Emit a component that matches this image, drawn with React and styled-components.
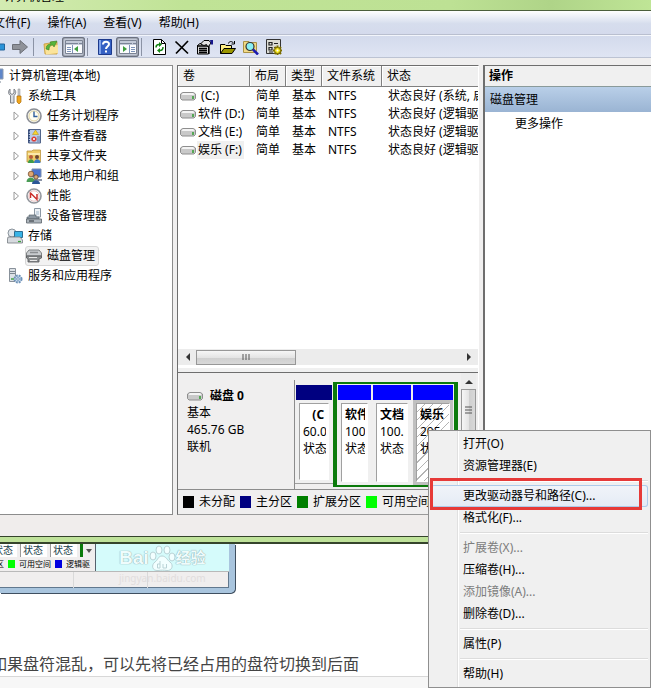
import styled, { createGlobalStyle, css } from 'styled-components';


const tree = [
  { text: '计算机管理(本地)', level: 0, icon: 'computer' },
  { text: '系统工具', level: 1, icon: 'tools' },
  { text: '任务计划程序', level: 2, icon: 'clock', expandable: true },
  { text: '事件查看器', level: 2, icon: 'events', expandable: true },
  { text: '共享文件夹', level: 2, icon: 'shared', expandable: true },
  { text: '本地用户和组', level: 2, icon: 'users', expandable: true },
  { text: '性能', level: 2, icon: 'perf', expandable: true },
  { text: '设备管理器', level: 2, icon: 'device' },
  { text: '存储', level: 1, icon: 'storage' },
  { text: '磁盘管理', level: 2, icon: 'disk', selected: true },
  { text: '服务和应用程序', level: 1, icon: 'services' },
];

const volumes = [
  { name: '\u00a0(C:)', status: '状态良好 (系统, 启动)' },
  { name: '软件 (D:)', status: '状态良好 (逻辑驱动器)' },
  { name: '文档 (E:)', status: '状态良好 (逻辑驱动器)' },
  { name: '娱乐 (F:)', status: '状态良好 (逻辑驱动器)', selected: true },
];

const logicalDrives = [
  { name: '软件', size: '100', width: 33 },
  { name: '文档', size: '100.', width: 38 },
  { name: '娱乐', size: '205', width: 40, selected: true },
];

const legend = [
  { text: '未分配', color: '#000000' },
  { text: '主分区', color: '#000080' },
  { text: '扩展分区', color: '#008000' },
  { text: '可用空间', color: '#00ff00' },
  { text: '逻辑驱动器', color: '#0000ff' },
];

const menuItems = [
  { text: '打开(O)' },
  { text: '资源管理器(E)' },
  null,
  { text: '更改驱动器号和路径(C)...', active: true },
  { text: '格式化(F)...' },
  null,
  { text: '扩展卷(X)...', disabled: true },
  { text: '压缩卷(H)...' },
  { text: '添加镜像(A)...', disabled: true },
  { text: '删除卷(D)...' },
  null,
  { text: '属性(P)' },
  null,
  { text: '帮助(H)' },
];


export default function App() {
  return (
    <Page>
      <GlobalStyle />

      <Window>
        <TitleBar>计算机管理</TitleBar>
        <MenuBar>
          <MenuButton>文件(F)</MenuButton>
          <MenuButton>操作(A)</MenuButton>
          <MenuButton>查看(V)</MenuButton>
          <MenuButton>帮助(H)</MenuButton>
        </MenuBar>
        <Toolbar />

        <Body>
          <TreePanel>
            {tree.map((item) => (
              <TreeItem key={item.text} $level={item.level}>
                {item.level === 2 && (
                  <Expander>
                    {item.expandable && (
                      <svg width="12" height="12">
                        <path d="M5 2 L9.500 6 L5 10 Z" fill="#fff" stroke="#9a9a9a" />
                      </svg>
                    )}
                  </Expander>
                )}
                <TreeLabel $selected={item.selected}>
                  <Icon name={item.icon} />
                  {item.text}
                </TreeLabel>
              </TreeItem>
            ))}
          </TreePanel>

          <CenterPanel>
            <VolumeList />
            <DiskMap />
            <Legend>
              {legend.map((item) => (
                <LegendItem key={item.text}>
                  <Swatch $color={item.color} />
                  {item.text}
                </LegendItem>
              ))}
            </Legend>
          </CenterPanel>

          <ActionsPanel>
            <ActionsTitle>操作</ActionsTitle>
            <ActionsSection>磁盘管理</ActionsSection>
            <ActionButton>更多操作</ActionButton>
          </ActionsPanel>
        </Body>

        <StatusBar />
        <WindowEdge />
      </Window>

      <OldScreenshot />
      <Caption>如果盘符混乱，可以先将已经占用的盘符切换到后面</Caption>
      <Footer />

      <ContextMenu />
    </Page>
  );
}


function Toolbar() {
  return (
    <ToolbarContainer>
      <ToolButton aria-label="后退"><Icon name="back" /></ToolButton>
      <ToolButton aria-label="前进"><Icon name="forward" /></ToolButton>
      <ToolSeparator />
      <ToolButton aria-label="上移一级"><Icon name="up" /></ToolButton>
      <ToolButton aria-label="控制台树" $pressed><Icon name="paneLeft" /></ToolButton>
      <ToolSeparator />
      <ToolButton aria-label="帮助"><Icon name="help" /></ToolButton>
      <ToolButton aria-label="操作窗格" $pressed><Icon name="paneRight" /></ToolButton>
      <ToolSeparator />
      <ToolButton aria-label="刷新"><Icon name="refresh" /></ToolButton>
      <ToolButton aria-label="删除"><Icon name="remove" /></ToolButton>
      <ToolButton aria-label="属性"><Icon name="properties" /></ToolButton>
      <ToolButton aria-label="打开"><Icon name="open" /></ToolButton>
      <ToolButton aria-label="查找"><Icon name="find" /></ToolButton>
      <ToolButton aria-label="设置"><Icon name="settings" /></ToolButton>
    </ToolbarContainer>
  );
}

function VolumeList() {
  return (
    <>
      <ListPane>
        <Table>
          <colgroup>
            <col width="72" />
            <col width="36" />
            <col width="36" />
            <col width="60" />
            <col />
          </colgroup>
          <thead>
            <tr>
              <th>卷</th>
              <th>布局</th>
              <th>类型</th>
              <th>文件系统</th>
              <th>状态</th>
            </tr>
          </thead>
          <tbody>
            {volumes.map((volume) => (
              <tr key={volume.name}>
                <NameCell>
                  <VolumeName>
                    <Icon name="drive" />
                    <VolumeText $selected={volume.selected}>{volume.name}</VolumeText>
                  </VolumeName>
                </NameCell>
                <td>简单</td>
                <td>基本</td>
                <td>NTFS</td>
                <td>{volume.status}</td>
              </tr>
            ))}
          </tbody>
        </Table>
      </ListPane>
      <ScrollRow>
        <ScrollArrow aria-label="向左滚动">
          <svg width="5" height="8"><path d="M5 0 L1 4 L5 8 Z" fill="#333" /></svg>
        </ScrollArrow>
        <ThumbH>
          <svg width="9" height="6"><path d="M1 0V6M4 0V6M7 0V6" stroke="#555" fill="none" /></svg>
        </ThumbH>
        <Spacer />
        <ScrollArrow aria-label="向右滚动">
          <svg width="5" height="8"><path d="M0 0 L4 4 L0 8 Z" fill="#333" /></svg>
        </ScrollArrow>
      </ScrollRow>
      <Splitter />
    </>
  );
}

function DiskMap() {
  return (
    <DiskPane>
      <DiskInfo>
        <DiskTitle>
          <Icon name="drive" />
          磁盘 0
        </DiskTitle>
        <p>基本</p>
        <p>465.76 GB</p>
        <p>联机</p>
      </DiskInfo>
      <PrimaryPart>
        <Volume name={'\u00a0\u00a0\u00a0(C'} size="60.0" color="#000080" width={36} />
      </PrimaryPart>
      <ExtendedPart>
        {logicalDrives.map((drive) => (
          <Volume key={drive.name} color="#0000ff" {...drive} />
        ))}
      </ExtendedPart>
      <ScrollColumn>
        <ScrollArrow aria-label="向上滚动">
          <svg width="8" height="5"><path d="M0 5 L4 1 L8 5 Z" fill="#333" /></svg>
        </ScrollArrow>
        <ThumbV>
          <svg width="7" height="9"><path d="M0 1H7M0 4H7M0 7H7" stroke="#555" fill="none" /></svg>
        </ThumbV>
      </ScrollColumn>
    </DiskPane>
  );
}

function Volume({ name, size, color, width, selected }) {
  return (
    <VolumeContainer $width={width} $selected={selected}>
      <VolumeBar $color={color} />
      <VolumeBox $selected={selected}>
        <VolumeClip>
          <strong>{name}</strong>
          <span>{size}</span>
          <span>状态</span>
        </VolumeClip>
      </VolumeBox>
    </VolumeContainer>
  );
}

function ContextMenu() {
  return (
    <MenuContainer role="menu">
      {menuItems.map((item, index) =>
        item ? (
          <MenuItem key={item.text} role="menuitem" disabled={item.disabled} $active={item.active}>
            {item.text}
            {item.active && <RedFrame />}
          </MenuItem>
        ) : (
          <MenuSeparator key={index} />
        )
      )}
    </MenuContainer>
  );
}

function OldScreenshot() {
  return (
    <OldWindow>
      <OldContent>
        <OldLeft>
          <OldVolumes>
            <OldVolume>状态</OldVolume>
            <OldVolume>状态</OldVolume>
            <OldVolume>状态</OldVolume>
            <OldGreen />
            <svg width="6" height="4"><path d="M0 0H6L3 4Z" fill="#555" /></svg>
          </OldVolumes>
          <OldLegend>
            区
            <OldSwatch $color="#00ff00" />
            可用空间
            <OldSwatch $color="#0000e0" />
            逻辑驱
          </OldLegend>
        </OldLeft>
        <OldRight />
      </OldContent>
      <OldStatus>
        <span />
        <span />
      </OldStatus>
      <Watermark>
        <WatermarkLogo>
          Bai
          <svg width="27" height="27" viewBox="0 0 27 27" fill="#f2ffff" stroke="#b9d3d6">
            <ellipse cx="4" cy="11" rx="3" ry="4" />
            <ellipse cx="10" cy="5" rx="3" ry="4" />
            <ellipse cx="18" cy="5" rx="3" ry="4" />
            <ellipse cx="23" cy="12" rx="3" ry="4" />
            <path d="M13 11 C17 11 18 15 21 17 C25 20 23 26 18 25.500 C15 25 12 25 9 25.500 C3 26 2 20 6 17 C9 15 9 11 13 11Z" />
            <path d="M11 16V23H8.500V19H11M14 19V23H17.500V19" fill="none" />
          </svg>
          <small>经验</small>
        </WatermarkLogo>
        <WatermarkUrl>jingyan.baidu.com</WatermarkUrl>
      </Watermark>
    </OldWindow>
  );
}


const pane = (
  <>
    <path d="M0.500 1.500H17.500V14.500H0.500Z" fill="#fbfcfe" stroke="#7c8494" />
    <path d="M1 2H17V6H1Z" fill="#c3cad8" />
    <path d="M1 4.500H13M14 4.500H17" stroke="#7b8598" />
  </>
);

const icons = {
  back: <path d="M0 8L8 1V5H15.500V11H8V15Z" fill="#2a93d8" stroke="#22659c" />,
  forward: <path d="M0.500 5.500H8V1.500L15.500 8L8 14.500V10.500H0.500Z" fill="#8f9299" stroke="#6d7078" />,
  up: (
    <>
      <path d="M1 5L7 4L8 3H14V15H2Z" fill="#eec967" stroke="#c59a38" strokeWidth="0.800" />
      <path d="M2 8L15 6V14L3 15.500Z" fill="#fbe49b" />
      <path d="M3 10C3 6 6 5 8 5L7 3L14 2L11 8L10 6C7 6 6 8 6 11Z" fill="#57b53c" stroke="#348222" strokeWidth="0.600" />
    </>
  ),
  paneLeft: (
    <>
      {pane}
      <path d="M2 8.500H6M2 10.500H6M2 12.500H6M7.500 6V14" stroke="#7d93b8" />
      <path d="M13 7V13L9 10Z" fill="#3d9e3d" />
    </>
  ),
  paneRight: (
    <>
      {pane}
      <path d="M12 8.500H16M12 10.500H16M12 12.500H16M10.500 6V14" stroke="#7d93b8" />
      <path d="M4 7V13L8 10Z" fill="#3d9e3d" />
    </>
  ),
  help: (
    <>
      <path d="M1.500 0.500H14.500V15.500H1.500Z" fill="#3460c4" stroke="#1d3a8c" />
      <path d="M2 1H4V15H2Z" fill="#7fa2ea" />
      <path d="M6 5.500C6 2 12 2 12 5C12 7.500 9 7.500 9 10M9 11.500V13.500" fill="none" stroke="#fff" strokeWidth="2" />
    </>
  ),
  refresh: (
    <>
      <path d="M2.500 0.500H10.500L14.500 4.500V15.500H2.500Z" fill="#fff" stroke="#000" />
      <path d="M10.500 0.500V4.500H14.500" fill="none" stroke="#000" />
      <path d="M5 8.500C5 6 6.500 5.500 8 5.500M12 8C12 10.500 10.500 11.500 9 11.500" fill="none" stroke="#148514" strokeWidth="1.500" />
      <path d="M8 3L11 5.500L8 8ZM9 9V14L6 11.500Z" fill="#148514" />
    </>
  ),
  remove: <path d="M1.500 2.500L14 14.500M14 2L2 14.500" stroke="#000" strokeWidth="1.700" />,
  properties: (
    <>
      <path d="M0.500 6.500L3 4.500H11.500V15H0.500Z" fill="#d8d8d8" stroke="#000" />
      <path d="M0 7H11M2 9.500H10M2 11.500H10M2 13.500H10M12 6V15" stroke="#000" strokeWidth="1.300" />
      <path d="M3.500 5L7 1.500H12L14 4L11 8L9.500 5.500L7 6.500Z" fill="#e4e4e4" stroke="#000" />
      <path d="M13 1H16V5.500H14Z" fill="#16168c" />
    </>
  ),
  open: (
    <>
      <path d="M0.500 14.500V5.500H5L6 6.500H11.500V9" fill="#ffef85" stroke="#000" />
      <path d="M0.500 14.500L4 9.500H15.500L12 14.500Z" fill="#9a9600" stroke="#000" />
      <path d="M8.500 4.500C9 2 12 2 13.500 4M14.500 2V5H11.500" fill="none" stroke="#000" />
    </>
  ),
  find: (
    <>
      <path d="M0.500 13.500V2.500H6L7 3.500H13.500V13.500Z" fill="#f1d986" stroke="#aa9246" />
      <circle cx="7" cy="7.500" r="4" fill="#8af0f4" stroke="#333" strokeWidth="1.200" />
      <path d="M10 10.500L15 15.500" stroke="#1a1ab0" strokeWidth="2.500" />
    </>
  ),
  settings: (
    <>
      <path d="M0.500 0.500H14.500V14.500H0.500Z" fill="#dcdcd4" stroke="#333" />
      <path d="M3 3.500H6V6H3ZM8 4.500H12M3 8.500H6V11H3ZM8 8.500H12M3 13H7" fill="none" stroke="#222" strokeWidth="1.200" />
      <path d="M11.500 6.500V16M7 11.500H16M8.500 8L15 15M15 8L8.500 15" stroke="#7a6c00" strokeWidth="2" />
      <circle cx="11.500" cy="11.500" r="3" fill="#f6e620" stroke="#7a6c00" />
      <circle cx="11.500" cy="11.500" r="1" fill="#fff" />
    </>
  ),
  computer: (
    <>
      <path d="M1 1H15V11H1Z" fill="#5f86c9" stroke="#8d9bb0" />
      <path d="M4 13H13V15H4Z" fill="#b9c0c8" />
    </>
  ),
  tools: (
    <>
      <path d="M3 1V5L5 6.500L7 5V1C9.500 3 9 6 7 7.500V15H3.500V7.500C1 6 1 3 3 1Z" fill="#d9dde2" stroke="#70757c" strokeWidth="0.900" />
      <path d="M11 1H13V8H11Z" fill="#c8ccd2" stroke="#888" strokeWidth="0.500" />
      <path d="M10 8H14V14L12 16L10 14Z" fill="#f0a61c" stroke="#b06f0a" strokeWidth="0.700" />
    </>
  ),
  clock: (
    <>
      <circle cx="8" cy="8" r="7" fill="#f8f8f2" stroke="#8c8f96" strokeWidth="1.600" />
      <circle cx="8" cy="8" r="5" fill="#fffef3" stroke="#d7c88c" strokeWidth="0.800" />
      <path d="M8 3.500V8.500H11.500" fill="none" stroke="#315f9c" strokeWidth="1.400" />
    </>
  ),
  events: (
    <>
      <path d="M2.500 1.500H14.500V15H2.500Z" fill="#b9cbe8" stroke="#52658a" />
      <path d="M3 2V15" stroke="#344a78" strokeWidth="2" strokeDasharray="1.500 1" />
      <path d="M9.500 2L12.500 6.500H6.500Z" fill="#f8d32d" stroke="#b38b0b" strokeWidth="0.500" />
      <circle cx="8" cy="11" r="2.600" fill="#d83a35" />
      <path d="M6.800 9.800L9.200 12.200M9.200 9.800L6.800 12.200" stroke="#fff" strokeWidth="0.800" />
      <path d="M11 9H14M11 11H14M11 13H14" stroke="#657ca8" />
    </>
  ),
  shared: (
    <>
      <path d="M1 3H6L7 2H14.500V14H1Z" fill="#efcb68" stroke="#bd9740" strokeWidth="0.800" />
      <path d="M2 5H14V7H2Z" fill="#fbe9ac" />
      <circle cx="5" cy="9" r="2" fill="#b65c3d" />
      <path d="M2 15C2 10 8 10 8 15Z" fill="#3e9c47" />
      <circle cx="11" cy="9" r="2" fill="#6b4632" />
      <path d="M8 15C8 10 14.500 10 14.500 15Z" fill="#3c7dc4" />
    </>
  ),
  users: (
    <>
      <path d="M6 1H15V9H6Z" fill="#4b73ce" stroke="#7d8fae" />
      <path d="M8 11H16V13H8Z" fill="#8a93a6" />
      <circle cx="5" cy="6" r="2.800" fill="#dda672" stroke="#6c4528" strokeWidth="0.700" />
      <path d="M0.500 14C0.500 8 9 8 9 14Z" fill="#4a9c56" />
      <circle cx="10" cy="9" r="2.200" fill="#d9a87a" stroke="#49311f" strokeWidth="0.700" />
      <path d="M6 16C6 11 14 11 14 16Z" fill="#2c5797" />
    </>
  ),
  perf: (
    <>
      <circle cx="8" cy="8" r="7" fill="#fff" stroke="#92969c" strokeWidth="1.600" />
      <path d="M4.500 10V5L11 11.500V6" fill="none" stroke="#cc2f2b" strokeWidth="1.500" />
      <circle cx="8" cy="8" r="5.200" fill="none" stroke="#d89b9b" strokeWidth="0.600" />
    </>
  ),
  device: (
    <>
      <path d="M8.500 0.500H14.500V9H8.500Z" fill="#eef2f6" stroke="#8c98a4" />
      <path d="M10 4H13M10 6H13" stroke="#9fb4c8" />
      <path d="M3 7H10V9H13V11H1V9H3Z" fill="#8d98a3" stroke="#5d6771" strokeWidth="0.700" />
      <path d="M0.500 11H15.500V15H0.500Z" fill="#aeb6bd" stroke="#5b6269" strokeWidth="0.800" />
      <path d="M3 13H8" stroke="#2b3136" />
    </>
  ),
  storage: (
    <>
      <circle cx="5" cy="5" r="4" fill="#dfe5ea" stroke="#8b949c" />
      <path d="M7.500 3.500H15.500V9.500H7.500Z" fill="#39b4e6" stroke="#2c6e93" />
      <path d="M1 9H13L15.500 12V15H0.500V11Z" fill="#d6dade" stroke="#767c82" strokeWidth="0.800" />
      <path d="M11 13.500H14" stroke="#3aa63a" strokeWidth="1.200" />
    </>
  ),
  disk: (
    <>
      <path d="M3 2H13L15.500 5V8H0.500V5Z" fill="#c9cccf" stroke="#66696c" strokeWidth="0.800" />
      <path d="M4 4.500H12" stroke="#8b8e91" strokeWidth="1.500" />
      <path d="M0.500 8H15.500V10L13 11V14H2V11L0.500 10Z" fill="#8b8e90" stroke="#515355" strokeWidth="0.800" />
      <path d="M3 9.500H11M4 12.500H11" stroke="#e8e8e8" />
    </>
  ),
  services: (
    <>
      <path d="M2.500 0.500H8.500V13.500H2.500Z" fill="#dde2e6" stroke="#88919a" />
      <path d="M3 3.500H8M3 5.500H8" stroke="#7d8790" />
      <path d="M4 11H7" stroke="#43a643" strokeWidth="1.500" />
      <circle cx="11" cy="11" r="3.500" fill="#c6d9ec" stroke="#6f93b8" strokeWidth="2" strokeDasharray="1.800 1" />
      <circle cx="11" cy="11" r="1.300" fill="#fff" stroke="#6f93b8" />
    </>
  ),
  drive: (
    <>
      <path d="M2.500 4.500H13.500L15.500 6V10.500L14 12H2L0.500 10.500V6Z" fill="#c9c9c9" stroke="#8e8e8e" />
      <path d="M3 5H13L14.500 7H1.500Z" fill="#f4f4f4" />
      <path d="M13 8V11" stroke="#2f9c2f" strokeWidth="1.500" />
    </>
  ),
};

function Icon({ name }) {
  const width = name.startsWith('pane') ? 18 : 16;
  return (
    <IconSvg width={width} height="16" viewBox={`0 0 ${width} 16`} fill="none" aria-hidden="true">
      {icons[name]}
    </IconSvg>
  );
}


const GlobalStyle = createGlobalStyle`
  * {
    box-sizing: border-box;
  }

  body {
    margin: 0;
    background-color: #fff;
    font-family: 'Noto Sans', 'Noto Sans CJK SC', sans-serif;
    font-size: 12px;
    line-height: 18px;
    color: #000;
  }

  button {
    margin: 0;
    padding: 0;
    border: 0;
    background: none;
    font: inherit;
    color: inherit;
    white-space: nowrap;
  }

  p {
    margin: 0;
  }
`;

const Page = styled.div`
  position: relative;
  min-height: 100vh;
  overflow: hidden;
`;

const IconSvg = styled.svg`
  display: block;
  flex-shrink: 0;
`;

/* the window hangs over the top left corner of the page */
const Window = styled.div`
  margin: -20px 0 0 -16px;
  background-color: #f0efef;
`;

const TitleBar = styled.div`
  height: 31px;
  padding: 8px 20px;
  background: linear-gradient(90deg, #d5ecb4, #c0e396 30%, #bde194 70%, #afd488 85%, #bfe596);
  border-bottom: 1px solid #4c5f3c;
`;

const MenuBar = styled.div`
  display: flex;
  gap: 1px;
  height: 24px;
  padding-left: 1px;
  background: linear-gradient(#ffffff, #d6dded 55%, #d4daec);
  border-bottom: 1px solid #b9bfcf;
`;

const MenuButton = styled.button`
  padding: 0 8px;
`;

const ToolbarContainer = styled.div`
  display: flex;
  align-items: center;
  height: 23px;
  padding-left: 1px;
  background: linear-gradient(#d3daec, #dfe5f3);
  border-top: 1px solid #f2f5fb;
  border-bottom: 1px solid #bcc3d3;
`;

const ToolButton = styled.button`
  display: flex;
  justify-content: center;
  align-items: center;
  width: 23px;
  height: 20px;
  ${({ $pressed }) => $pressed && css`
    background-color: #c3c9d6;
    box-shadow: inset 0 0 0 1px #6c7280, inset 0 0 0 2px #a3a9b6;
    border-radius: 3px;
  `}
`;

const ToolSeparator = styled.div`
  width: 1px;
  height: 18px;
  margin: 0 5px 0 2px;
  background-color: #8b93a5;
`;

const Body = styled.div`
  display: grid;
  grid-template-columns: 189px minmax(0, 1fr) 168px;
  gap: 4px;
  padding-top: 7px;
`;

const TreePanel = styled.ul`
  margin: 0;
  padding: 0;
  list-style: none;
  background-color: #fff;
  border: 1px solid #8c8c8c;
`;

const treeIndent = [2, 21, 24];

const TreeItem = styled.li`
  display: flex;
  align-items: center;
  gap: 4px;
  height: 20px;
  padding-left: ${({ $level }) => treeIndent[$level]}px;
`;

const Expander = styled.span`
  width: 12px;
  height: 12px;

  svg {
    display: block;
  }
`;

const TreeLabel = styled.button`
  display: flex;
  align-items: center;
  gap: 5px;
  padding-right: 3px;
  border: 1px solid ${({ $selected }) => ($selected ? '#d6d6d6' : 'transparent')};
  border-radius: 3px;
  background-color: ${({ $selected }) => ($selected ? '#f2f2f2' : 'transparent')};
`;

const CenterPanel = styled.div`
  display: flex;
  flex-direction: column;
  border: 1px solid #6e6e6e;
  border-right-color: #fff;
  border-bottom-color: #9a9a9a;
  overflow: hidden;
`;

const ListPane = styled.div`
  height: 283px;
  background-color: #fff;
  overflow: hidden;
`;

const Table = styled.table`
  width: 100%;
  table-layout: fixed;
  border-collapse: separate;
  border-spacing: 0;

  th {
    height: 21px;
    padding: 0 0 0 5px;
    font-weight: 400;
    text-align: left;
    background-color: #f0f0f0;
    border-right: 1px solid #7f7f7f;
    border-bottom: 1px solid #7f7f7f;
    box-shadow: inset 1px 1px #fff;
    white-space: nowrap;
  }

  th:last-child {
    border-right: 0;
  }

  td {
    height: 18px;
    padding: 0 0 0 6px;
    white-space: nowrap;
    overflow: hidden;
  }
`;

const NameCell = styled.td`
  && {
    padding-left: 2px;
  }
`;

const VolumeName = styled.div`
  display: flex;
  align-items: center;
  gap: 1px;
`;

const VolumeText = styled.span`
  padding: 0 2px 0 1px;
  background-color: ${({ $selected }) => ($selected ? '#f0f0f0' : 'transparent')};
`;

const ScrollRow = styled.div`
  display: flex;
  align-items: center;
  height: 16px;
  background-color: #ececec;
`;

const ScrollArrow = styled.button`
  display: flex;
  justify-content: center;
  align-items: center;
  width: 18px;
  height: 16px;
`;

const ThumbH = styled.div`
  display: flex;
  justify-content: center;
  align-items: center;
  width: 100px;
  height: 15px;
  background: linear-gradient(#f6f6f6, #e4e4e4 50%, #cfcfcf 55%, #d8d8d8);
  border: 1px solid #979797;
`;

const Spacer = styled.div`
  flex: 1;
`;

const Splitter = styled.div`
  height: 8px;
  background-color: #f0f0f0;
  border-top: 3px solid #fff;
  border-bottom: 1px solid #6e6e6e;
`;

const DiskPane = styled.div`
  display: flex;
  height: 117px;
  border-bottom: 1px solid #8c8c8c;
`;

const DiskInfo = styled.div`
  flex: 1;
  margin-top: 7px;
  padding: 7px 9px;
  line-height: 17px;
  border-right: 1px solid #8c8c8c;
  white-space: nowrap;
`;

const DiskTitle = styled.div`
  display: flex;
  align-items: center;
  gap: 7px;
  font-weight: 700;
`;

const PrimaryPart = styled.div`
  display: flex;
  height: 111px;
  padding: 12px 1px 0;
  border-bottom: 1px solid #a0a0a0;
`;

const ExtendedPart = styled.div`
  display: flex;
  gap: 2px;
  height: 105px;
  margin-top: 9px;
  padding: 1px 1px 0;
  border: solid #0b7a0b;
  border-width: 2px 4px;
`;

const VolumeContainer = styled.div`
  display: flex;
  flex-direction: column;
  width: ${({ $width }) => $width}px;
  background-color: ${({ $selected }) => ($selected ? '#c0c0c0' : '#f0f0f0')};
`;

const VolumeBar = styled.div`
  height: 15px;
  background-color: ${({ $color }) => $color};
`;

const VolumeBox = styled.div`
  flex: 1;
  margin: 3px;
  padding: 2px 2px 0 3px;
  border: 1px solid #a0a0a0;
  border-right-color: #fff;
  border-bottom-color: #fff;
  background: ${({ $selected }) =>
    $selected ? 'repeating-linear-gradient(135deg, #fff 0 5px, #b4b4b4 5px 6px)' : '#fff'};
`;

const VolumeClip = styled.div`
  display: flex;
  flex-direction: column;
  line-height: 17px;
  white-space: nowrap;
  overflow: hidden;
`;

const ScrollColumn = styled.div`
  display: flex;
  flex-direction: column;
  align-items: center;
  width: 15px;
  margin: 0 2px 0 3px;
  background-color: #ececec;
`;

const ThumbV = styled.div`
  display: flex;
  justify-content: center;
  align-items: center;
  width: 15px;
  height: 42px;
  background: linear-gradient(90deg, #f6f6f6, #e4e4e4 50%, #cfcfcf 55%, #d8d8d8);
  border: 1px solid #979797;
`;

const Legend = styled.div`
  display: flex;
  gap: 5px;
  height: 24px;
  padding: 3px 5px;
  white-space: nowrap;
  overflow: hidden;
`;

const LegendItem = styled.div`
  display: flex;
  align-items: center;
  gap: 5px;
`;

const Swatch = styled.div`
  width: 11px;
  height: 12px;
  background-color: ${({ $color }) => $color};
`;

const ActionsPanel = styled.div`
  background-color: #fff;
  border: solid #6e6e6e;
  border-width: 1px 0 1px 2px;
`;

const ActionsTitle = styled.div`
  height: 21px;
  padding-left: 4px;
  line-height: 20px;
  font-weight: 700;
  background-color: #f0f0f0;
  border-bottom: 1px solid #8a9a9a;
`;

const ActionsSection = styled.div`
  height: 25px;
  padding-left: 5px;
  line-height: 25px;
  background: linear-gradient(#b9cfe8, #9ab4d3);
`;

const ActionButton = styled.button`
  display: block;
  height: 24px;
  padding-left: 30px;
`;

const StatusBar = styled.div`
  height: 21px;
  background-color: #f0edec;
`;

const WindowEdge = styled.div`
  height: 8px;
  background-color: #bfe29a;
  border: solid #35442b;
  border-width: 1px 0 2px;
`;

const OldWindow = styled.div`
  position: relative;
  width: 235px;
  height: 49px;
  background-color: #f0eeee;
  border: solid #a9c5de;
  border-width: 0 6px 5px 0;
  border-radius: 0 0 5px 0;
  box-shadow: inset -1px -1px #61788e, 1px 1px #3f4f60;
`;

const OldContent = styled.div`
  display: flex;
  height: 27px;
`;

const OldLeft = styled.div`
  width: 96px;
  font-size: 8px;
  line-height: 12px;
  border-right: 1px solid #55616d;
  white-space: nowrap;
  overflow: hidden;
`;

const OldVolumes = styled.div`
  display: flex;
  align-items: center;
  gap: 3px;
  height: 13px;
  margin-left: -10px;
`;

const OldVolume = styled.div`
  width: 27px;
  height: 13px;
  padding-left: 2px;
  font-size: 10px;
  line-height: 13px;
  color: #17404a;
  background-color: #fff;
  border-left: 1px solid #999;
`;

const OldGreen = styled.div`
  width: 3px;
  height: 13px;
  background-color: #0b7a0b;
`;

const OldLegend = styled.div`
  display: flex;
  align-items: center;
  gap: 4px;
  height: 13px;
  margin-left: -4px;
`;

const OldSwatch = styled.div`
  width: 7px;
  height: 8px;
  background-color: ${({ $color }) => $color};
`;

const OldRight = styled.div`
  flex: 1;
  background-color: #d5fbfb;
`;

const OldStatus = styled.div`
  display: flex;
  height: 17px;
  border-top: 1px solid #b9b9b9;

  span {
    width: 74px;
    border-right: 1px solid #d9d9d9;
  }
`;

const Watermark = styled.div`
  position: absolute;
  top: 0;
  left: 119px;
`;

const WatermarkLogo = styled.div`
  display: flex;
  align-items: center;
  height: 28px;
  font-family: 'Liberation Sans', 'Noto Sans CJK SC', sans-serif;
  font-size: 19px;
  font-weight: 700;
  line-height: 28px;
  color: #effcfc;
  text-shadow: 0 0 1px #7fa0a4, 0 0 1px #9fbcc0;

  small {
    font-size: 15px;
  }
`;

const WatermarkUrl = styled.div`
  font-size: 10px;
  line-height: 12px;
  color: #e1dddd;
`;

const Caption = styled.p`
  margin: 59px 0 0 -9px;
  font-size: 16px;
  line-height: 24px;
  color: #444;
`;

const Footer = styled.div`
  height: 13px;
  background-color: #f7f7f7;
  border-top: 1px solid #d8d8d8;
`;

const MenuContainer = styled.div`
  position: absolute;
  top: 430px;
  right: 0;
  width: 223px;
  padding: 2px;
  background: linear-gradient(90deg, #f0f0f0 28px, #e0e0e0 28px 29px, #fff 29px 30px, #f0f0f0 30px);
  border: 1px solid #8f8f8f;
`;

const MenuItem = styled.button`
  position: relative;
  display: block;
  width: 100%;
  height: 22px;
  padding-left: 32px;
  text-align: left;
  color: #000;

  &:disabled {
    color: #7d7d7d;
  }

  ${({ $active }) => $active && css`
    background: linear-gradient(#f1f4f9, #e4ebf5);
    box-shadow: inset 0 0 0 1px #aecbea;
    border-radius: 3px;
  `}
`;

const RedFrame = styled.span`
  position: absolute;
  inset: -7px 6px -3px -1px;
  border: 3px solid #e63a38;
`;

const MenuSeparator = styled.div`
  height: 8px;
  margin-left: 29px;
  background: linear-gradient(transparent 3px, #dcdcdc 3px 4px, #fff 4px 5px, transparent 5px);
`;
